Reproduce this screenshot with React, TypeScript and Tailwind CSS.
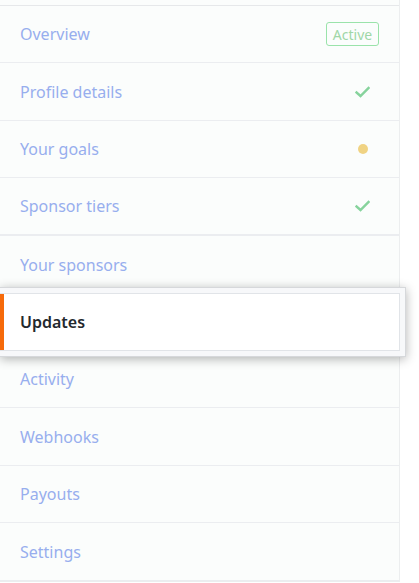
import React from 'react'

type Item = {
    label: string
    h: string
    status?: 'active' | 'done' | 'pending'
    thick?: boolean
}

const itemsTop: Item[] = [
    { label: 'Overview', h: 'h-[57px]', status: 'active' },
    { label: 'Profile details', h: 'h-[58px]', status: 'done' },
    { label: 'Your goals', h: 'h-[57px]', status: 'pending' },
    { label: 'Sponsor tiers', h: 'h-[58px]', status: 'done', thick: true }
]

const itemsBottom: Item[] = [
    { label: 'Activity', h: 'h-[57px]' },
    { label: 'Webhooks', h: 'h-[58px]' },
    { label: 'Payouts', h: 'h-[57px]' },
    { label: 'Settings', h: 'h-[58px]' }
]

function Status({ status }: { status?: Item['status'] }) {
    if (status === 'active') {
        return (
            <span className="h-[24px] w-[53px] flex items-center justify-center rounded-[3px] border border-[#9ae3aa] text-[14px] text-[#9fd7a7]">
                Active
            </span>
        )
    }
    if (status === 'done') {
        return (
            <svg className="mr-[9px] w-[15px] h-[12px]" viewBox="0 0 15 12" fill="none">
                <path d="M1.5 6.5 L5.5 10 L13.5 2" stroke="#86d39c" strokeWidth="2.4" strokeLinecap="square" />
            </svg>
        )
    }
    if (status === 'pending') {
        return <span className="mr-[11px] w-[10px] h-[10px] rounded-full bg-[#f0d383]" />
    }
    return null
}

function Row({ item }: { item: Item }) {
    return (
        <div
            className={`${item.h} flex items-center justify-between px-5 ${item.thick ? 'border-b-2' : 'border-b'} border-[#ebedf0]`}
        >
            <span className="text-[16px] text-[#97aeee]">{item.label}</span>
            <Status status={item.status} />
        </div>
    )
}

export default function App() {
    return (
        <div className="w-[419px] h-[583px] bg-white overflow-hidden" style={{ fontFamily: '"Segoe UI", "Noto Sans", "Open Sans", sans-serif' }}>
            <div className="w-[400px] bg-[#fbfdfc] border-r border-b border-[#eceeef] pt-[5px]">
                <div className="border-t border-[#e6e8ea]">
                    {itemsTop.map((item) => (
                        <Row key={item.label} item={item} />
                    ))}
                    <div className="h-[57px] flex items-center px-5">
                        <span className="text-[16px] text-[#97aeee]">Your sponsors</span>
                    </div>

                    <div className="relative z-10 -mt-[6px] -mb-[6px] mr-[-7px] py-[5px] bg-[#f7f8fa] border border-l-0 border-[#d6d8db] shadow-[0_2px_10px_rgba(0,0,0,0.3)]">
                        <div className="h-[58px] w-[400px] flex items-stretch bg-white border-y border-r border-[#e1e4e8]">
                            <div className="w-[4px] bg-[#f66a0a]" />
                            <div className="flex items-center pl-4">
                                <span className="text-[16px] font-semibold text-[#24292e]">Updates</span>
                            </div>
                        </div>
                    </div>

                    {itemsBottom.map((item) => (
                        <Row key={item.label} item={item} />
                    ))}
                </div>
            </div>
        </div>
    )
}
